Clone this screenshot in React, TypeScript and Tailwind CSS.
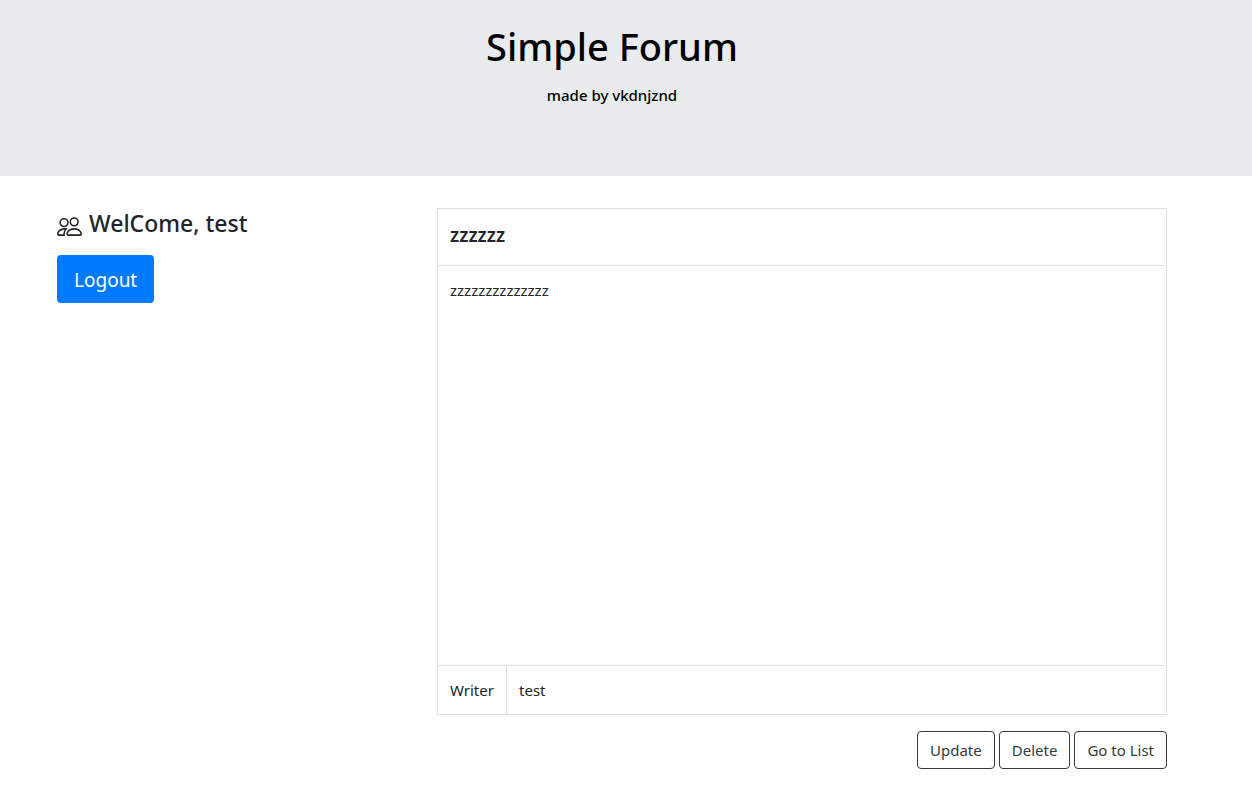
import { BsPeople } from "react-icons/bs";

const outlineButton =
  "h-[38px] cursor-pointer rounded border border-[#343a40] px-3 text-[15px] text-[#343a40] hover:bg-[#343a40] hover:text-white";

export default function App() {
  return (
    <div className="min-h-screen bg-white font-['Noto_Sans',sans-serif] text-[15px] text-[#212529]">
      <header className="bg-[#e9ecef] pt-[22px] pb-[70px] pr-7 text-center text-black">
        <h1 className="mb-3.5 text-[38px] leading-12 font-medium">Simple Forum</h1>
        <p className="leading-[22px] font-medium">made by vkdnjznd</p>
      </header>
      <main className="mx-auto flex max-w-[1140px] pt-8 pr-[29px] pl-px">
        <aside className="w-[380px] shrink-0">
          <h2 className="mb-4 flex items-end gap-[7px] text-[23px] leading-[31px] font-medium">
            <BsPeople className="size-[25px]" aria-hidden="true" />
            WelCome, test
          </h2>
          <button type="button" className="h-12 cursor-pointer rounded bg-[#007bff] px-[17px] pt-0.5 text-[19px] text-white">
            Logout
          </button>
        </aside>
        <section className="min-w-0 grow">
          <table className="w-full border-collapse border border-[#dee2e6] text-left">
            <tbody>
              <tr className="h-[57px] border-b border-[#dee2e6]">
                <th colSpan={2} className="px-3 pb-1 text-[19px] font-semibold">zzzzzz</th>
              </tr>
              <tr className="h-[400px] border-b border-[#dee2e6]">
                <td colSpan={2} className="p-3 align-top leading-6">zzzzzzzzzzzzzz</td>
              </tr>
              <tr className="h-[49px]">
                <th scope="row" className="w-[69px] border-r border-[#dee2e6] px-3 font-normal">Writer</th>
                <td className="px-3">test</td>
              </tr>
            </tbody>
          </table>
          <div className="mt-4 flex justify-end gap-1">
            <button type="button" className={outlineButton}>Update</button>
            <button type="button" className={outlineButton}>Delete</button>
            <button type="button" className={outlineButton}>Go to List</button>
          </div>
        </section>
      </main>
    </div>
  );
}
